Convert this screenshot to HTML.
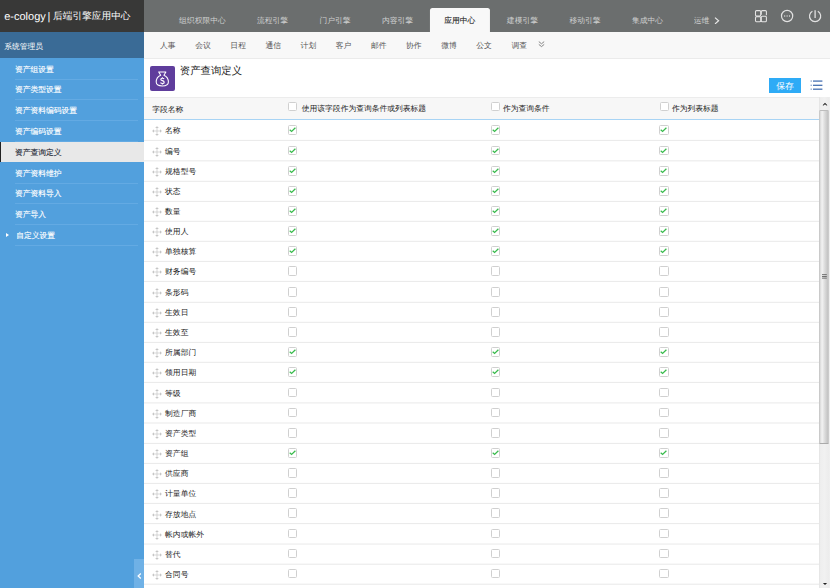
<!DOCTYPE html>
<html><head><meta charset="utf-8">
<style>
*{margin:0;padding:0;box-sizing:border-box}
html,body{width:830px;height:588px;overflow:hidden;background:#fff;font-family:"Liberation Sans",sans-serif;font-size:7.78px;color:#333;text-rendering:geometricPrecision}
#hdr{position:absolute;left:0;top:0;width:144px;height:32px;background:#383837}
#hdr .t{position:absolute;top:0;line-height:35px;color:#fff;white-space:nowrap;font-size:11px}
#hdr .t.cj{font-size:9.7px;line-height:34px}
#top{position:absolute;left:144px;top:0;width:686px;height:32px;background:#6b6e6e}
.tab{position:absolute;top:8.1px;height:23.9px;line-height:26.6px;color:#cfd0d0;font-size:7.78px;transform:translateX(-50%);white-space:nowrap}
.tab.act{background:#f8f8f8;color:#222;-webkit-text-stroke:0.1px #222;width:60.1px;text-align:center;border-radius:2.5px 2.5px 0 0}
#more{position:absolute;left:693.7px;top:8px;height:24px;line-height:26.2px;color:#cfd0d0;font-size:7.78px;white-space:nowrap;width:17.6px;overflow:hidden}
#sbhead{position:absolute;left:0;top:32px;width:144px;height:26.4px;background:#3a6b96}
#sbhead span{position:absolute;left:4.2px;top:0;line-height:30.4px;color:#fff;white-space:nowrap}
#sb{position:absolute;left:0;top:58.4px;width:144px;height:530px;background:#52a0dd}
.si{position:absolute;left:0;width:144px;height:20.8px;color:#fff}
.si span{position:absolute;top:0;line-height:21.9px;white-space:nowrap;-webkit-text-stroke:0.12px currentColor}
.si::after{content:"";position:absolute;left:15px;width:122.5px;bottom:0;height:0.8px;background:#63aae3}
.si.sel{background:#e8e8e8;color:#1d2633}
.si.sel::before{content:"";position:absolute;left:0;top:0;width:1.3px;height:100%;background:#222}
.si.sel::after{display:none}
.tri{position:absolute;left:5.7px;top:8.1px;width:0;height:0;border-left:3.2px solid #fff;border-top:2.5px solid transparent;border-bottom:2.5px solid transparent}
#collapse{position:absolute;left:134px;top:559px;width:10px;height:29px;background:#6fb1e6}
#nav2{position:absolute;left:144px;top:32px;width:686px;height:27px;background:#f8f8f8;border-bottom:1px solid #ebebeb}
.n2{position:absolute;top:32px;line-height:27.2px;color:#555;white-space:nowrap}
#icon{position:absolute;left:149.8px;top:65.7px;width:25.2px;height:25.3px;background:#5f3d9c;border-radius:2px}
#title{position:absolute;left:179.8px;top:59.5px;line-height:24.6px;font-size:10.4px;color:#222;white-space:nowrap}
#save{position:absolute;left:769.3px;top:78px;width:31.6px;height:14.8px;background:#2eabf6;color:#fff;font-size:8.9px;line-height:17px;text-align:center}
#list{position:absolute;left:810px;top:80px}
#thead{position:absolute;left:144px;top:97px;width:675px;height:23px;background:#f7f7f7;border-top:1px solid #ececec;border-bottom:1px solid #a8d4f5}
.th{position:absolute;top:0;line-height:24.6px;white-space:nowrap;color:#222;}
.th.s{line-height:22.4px}
.row{position:absolute;left:144px;width:675px;height:20.2px}
.mv{position:absolute;left:8.1px;top:6px}
.nm{position:absolute;left:21.1px;top:0;line-height:21.6px;white-space:nowrap;color:#222;}
.cb{position:absolute;width:9.3px;height:9.4px;border:1px solid #d0d0d0;border-radius:1.5px;background:#fff}
.cb svg{position:absolute;left:-1px;top:-1px}
#scroll{position:absolute;left:819px;top:97.4px;width:11px;height:491px;background:linear-gradient(to right,#e2e2e2 0,#eeeeee 14%,#f1f1f1 50%,#ececec 90%,#f0f0f0 100%)}
#thumb{position:absolute;left:819.2px;top:110.3px;width:9.9px;height:334px;border-radius:1.5px;background:linear-gradient(to right,#bfbfbf 0%,#e9e9e9 20%,#efefef 35%,#d9d9d9 60%,#c6c6c6 85%,#cdcdcd 100%);border-top:1px solid #bdbdbd;border-bottom:1px solid #aaa}
.sarr{position:absolute;width:0;height:0;border-left:3px solid transparent;border-right:3px solid transparent}
#up{left:822.6px;top:103px;border-left-width:2.2px;border-right-width:2.2px;border-bottom:2.2px solid #333}
#down{left:822.8px;top:582.6px;border-left-width:2.2px;border-right-width:2.2px;border-top:2.2px solid #333}
#grip{position:absolute;left:821.6px;top:273.5px}

</style></head><body>
<div id="hdr"><span class="t" style="left:4.2px">e-cology</span><span class="t" style="left:47.4px">|</span><span class="t cj" style="left:53px">后端引擎应用中心</span></div>
<div id="top"></div>
<div class="tab" style="left:202.4px">组织权限中心</div>
<div class="tab" style="left:272.6px">流程引擎</div>
<div class="tab" style="left:335px">门户引擎</div>
<div class="tab" style="left:397.5px">内容引擎</div>
<div class="tab act" style="left:459.8px">应用中心</div>
<div class="tab" style="left:522.4px">建模引擎</div>
<div class="tab" style="left:585px">移动引擎</div>
<div class="tab" style="left:647.5px">集成中心</div>
<div id="more">运维</div>
<svg style="position:absolute;left:713.5px;top:16.5px" width="6" height="7.5" viewBox="0 0 6 7.5"><path d="M1 0.6L4.6 3.75L1 6.9" stroke="#e8e8e8" stroke-width="1.2" fill="none"/></svg>
<svg style="position:absolute;left:754px;top:9px" width="14" height="14" viewBox="0 0 14 14"><g fill="none" stroke="#e4e4e4" stroke-width="1.05"><rect x="1.5" y="1.6" width="5.2" height="5.5" rx="1"/><path d="M7.3 5.8V2.6A1 1 0 0 1 8.3 1.6H11.4A1 1 0 0 1 12.4 2.6V6.2"/><rect x="1.5" y="7.7" width="5.2" height="5" rx="1"/><rect x="7.3" y="7.3" width="5.1" height="5.4" rx="1"/></g></svg>
<svg style="position:absolute;left:780px;top:9.3px" width="14" height="14" viewBox="0 0 14 14"><circle cx="7.1" cy="7" r="5.6" fill="none" stroke="#e2e2e2" stroke-width="1.2"/><g fill="#e2e2e2"><circle cx="4.7" cy="7" r="0.65"/><circle cx="7.1" cy="7" r="0.65"/><circle cx="9.5" cy="7" r="0.65"/></g></svg>
<svg style="position:absolute;left:808px;top:9.3px" width="14" height="14" viewBox="0 0 14 14"><path d="M4.4 2.2A5.6 5.6 0 1 0 9.8 2.2" fill="none" stroke="#e2e2e2" stroke-width="1.2"/><path d="M7.1 1.3V8.9" stroke="#e2e2e2" stroke-width="1.3"/></svg>
<div id="sbhead"><span>系统管理员</span></div>
<div id="sb"></div>
<div class="si" style="top:58.50px"><span style="left:15px">资产组设置</span></div>
<div class="si" style="top:79.30px"><span style="left:15px">资产类型设置</span></div>
<div class="si" style="top:100.10px"><span style="left:15px">资产资料编码设置</span></div>
<div class="si" style="top:120.90px"><span style="left:15px">资产编码设置</span></div>
<div class="si sel" style="top:141.70px"><span style="left:15px">资产查询定义</span></div>
<div class="si" style="top:162.50px"><span style="left:15px">资产资料维护</span></div>
<div class="si" style="top:183.30px"><span style="left:15px">资产资料导入</span></div>
<div class="si" style="top:204.10px"><span style="left:15px">资产导入</span></div>
<div class="si" style="top:224.90px"><i class="tri"></i><span style="left:16.3px">自定义设置</span></div>
<div id="collapse"><svg style="position:absolute;left:2.5px;top:13.8px" width="5" height="6" viewBox="0 0 5 6"><path d="M3.8 0.6L1.2 3L3.8 5.4" stroke="#fff" stroke-width="1.3" fill="none"/></svg></div>
<div id="nav2"></div>
<span class="n2" style="left:160.10px">人事</span>
<span class="n2" style="left:195.23px">会议</span>
<span class="n2" style="left:230.36px">日程</span>
<span class="n2" style="left:265.49px">通信</span>
<span class="n2" style="left:300.62px">计划</span>
<span class="n2" style="left:335.75px">客户</span>
<span class="n2" style="left:370.88px">邮件</span>
<span class="n2" style="left:406.01px">协作</span>
<span class="n2" style="left:441.14px">微博</span>
<span class="n2" style="left:476.27px">公文</span>
<span class="n2" style="left:511.40px">调查</span>
<svg style="position:absolute;left:537.5px;top:41.2px" width="7" height="6.5" viewBox="0 0 7 6.5"><path d="M0.8 0.6L3.5 2.8L6.2 0.6M0.8 3.4L3.5 5.6L6.2 3.4" stroke="#777" stroke-width="0.9" fill="none"/></svg>
<div id="icon"><svg style="position:absolute;left:0;top:0" width="25" height="25" viewBox="0 0 25 25"><path d="M8.7 5.9H15.9L13.9 9.2C16.9 10.5 18.4 13.5 18.4 16C18.4 18.8 16 19.9 12.3 19.9C8.6 19.9 6.2 18.8 6.2 16C6.2 13.5 7.7 10.5 10.7 9.2Z" fill="none" stroke="#fff" stroke-width="1.05" stroke-linejoin="round"/><path d="M14.1 12.9C13.7 12.4 13.1 12.2 12.4 12.2C11.4 12.2 10.8 12.7 10.8 13.4C10.8 15 14.2 14.3 14.2 16.2C14.2 17 13.5 17.5 12.4 17.5C11.6 17.5 10.9 17.2 10.5 16.7M12.4 11.2V12.2M12.4 17.5V18.5" fill="none" stroke="#fff" stroke-width="1.15"/></svg></div>
<div id="title">资产查询定义</div>
<div id="save">保存</div>
<svg id="list" width="13" height="11" viewBox="0 0 13 11"><g fill="#2f5fa8"><rect x="0.7" y="0.5" width="0.9" height="1.1"/><rect x="3" y="0.5" width="9.4" height="1.15"/><rect x="0.7" y="4.7" width="0.9" height="1.1"/><rect x="3" y="4.7" width="9.4" height="1.15"/><rect x="0.7" y="8.6" width="0.9" height="1.1"/><rect x="3" y="8.6" width="9.4" height="1.15"/></g></svg>
<div id="thead">
<span class="th" style="left:8.2px">字段名称</span>
<span class="cb" style="left:144.2px;top:4.1px"></span><span class="th s" style="left:157.8px">使用该字段作为查询条件或列表标题</span>
<span class="cb" style="left:347.2px;top:4.1px"></span><span class="th s" style="left:359px">作为查询条件</span>
<span class="cb" style="left:515.5px;top:4.1px"></span><span class="th s" style="left:528px">作为列表标题</span>
</div>
<div class="row" style="top:120.40px"><svg class="mv" width="10" height="10" viewBox="0 0 10 10"><path d="M0.8 5H9.2M5 0.8V9.2" stroke="#c6c6c6" stroke-width="0.7" fill="none"/><path d="M5 0.2L6.9 2H3.1ZM5 9.8L6.9 8H3.1ZM0.2 5L2 3.3V6.7ZM9.8 5L8 3.3V6.7Z" fill="#c6c6c6"/></svg><span class="nm">名称</span><span class="cb" style="left:144.0px;top:4.9px"><svg width="9" height="9" viewBox="0 0 9 9"><path d="M1.7 4.7L3.6 6.5L7.4 2.8" stroke="#38bb4c" stroke-width="1.25" fill="none"/></svg></span><span class="cb" style="left:346.9px;top:4.9px"><svg width="9" height="9" viewBox="0 0 9 9"><path d="M1.7 4.7L3.6 6.5L7.4 2.8" stroke="#38bb4c" stroke-width="1.25" fill="none"/></svg></span><span class="cb" style="left:515.3px;top:4.9px"><svg width="9" height="9" viewBox="0 0 9 9"><path d="M1.7 4.7L3.6 6.5L7.4 2.8" stroke="#38bb4c" stroke-width="1.25" fill="none"/></svg></span></div>
<div class="row" style="top:140.85px"><svg class="mv" width="10" height="10" viewBox="0 0 10 10"><path d="M0.8 5H9.2M5 0.8V9.2" stroke="#c6c6c6" stroke-width="0.7" fill="none"/><path d="M5 0.2L6.9 2H3.1ZM5 9.8L6.9 8H3.1ZM0.2 5L2 3.3V6.7ZM9.8 5L8 3.3V6.7Z" fill="#c6c6c6"/></svg><span class="nm">编号</span><span class="cb" style="left:144.0px;top:4.9px"><svg width="9" height="9" viewBox="0 0 9 9"><path d="M1.7 4.7L3.6 6.5L7.4 2.8" stroke="#38bb4c" stroke-width="1.25" fill="none"/></svg></span><span class="cb" style="left:346.9px;top:4.9px"><svg width="9" height="9" viewBox="0 0 9 9"><path d="M1.7 4.7L3.6 6.5L7.4 2.8" stroke="#38bb4c" stroke-width="1.25" fill="none"/></svg></span><span class="cb" style="left:515.3px;top:4.9px"><svg width="9" height="9" viewBox="0 0 9 9"><path d="M1.7 4.7L3.6 6.5L7.4 2.8" stroke="#38bb4c" stroke-width="1.25" fill="none"/></svg></span></div>
<div class="row" style="top:161.30px"><svg class="mv" width="10" height="10" viewBox="0 0 10 10"><path d="M0.8 5H9.2M5 0.8V9.2" stroke="#c6c6c6" stroke-width="0.7" fill="none"/><path d="M5 0.2L6.9 2H3.1ZM5 9.8L6.9 8H3.1ZM0.2 5L2 3.3V6.7ZM9.8 5L8 3.3V6.7Z" fill="#c6c6c6"/></svg><span class="nm">规格型号</span><span class="cb" style="left:144.0px;top:4.9px"><svg width="9" height="9" viewBox="0 0 9 9"><path d="M1.7 4.7L3.6 6.5L7.4 2.8" stroke="#38bb4c" stroke-width="1.25" fill="none"/></svg></span><span class="cb" style="left:346.9px;top:4.9px"><svg width="9" height="9" viewBox="0 0 9 9"><path d="M1.7 4.7L3.6 6.5L7.4 2.8" stroke="#38bb4c" stroke-width="1.25" fill="none"/></svg></span><span class="cb" style="left:515.3px;top:4.9px"><svg width="9" height="9" viewBox="0 0 9 9"><path d="M1.7 4.7L3.6 6.5L7.4 2.8" stroke="#38bb4c" stroke-width="1.25" fill="none"/></svg></span></div>
<div class="row" style="top:181.40px"><svg class="mv" width="10" height="10" viewBox="0 0 10 10"><path d="M0.8 5H9.2M5 0.8V9.2" stroke="#c6c6c6" stroke-width="0.7" fill="none"/><path d="M5 0.2L6.9 2H3.1ZM5 9.8L6.9 8H3.1ZM0.2 5L2 3.3V6.7ZM9.8 5L8 3.3V6.7Z" fill="#c6c6c6"/></svg><span class="nm">状态</span><span class="cb" style="left:144.0px;top:4.9px"><svg width="9" height="9" viewBox="0 0 9 9"><path d="M1.7 4.7L3.6 6.5L7.4 2.8" stroke="#38bb4c" stroke-width="1.25" fill="none"/></svg></span><span class="cb" style="left:346.9px;top:4.9px"><svg width="9" height="9" viewBox="0 0 9 9"><path d="M1.7 4.7L3.6 6.5L7.4 2.8" stroke="#38bb4c" stroke-width="1.25" fill="none"/></svg></span><span class="cb" style="left:515.3px;top:4.9px"><svg width="9" height="9" viewBox="0 0 9 9"><path d="M1.7 4.7L3.6 6.5L7.4 2.8" stroke="#38bb4c" stroke-width="1.25" fill="none"/></svg></span></div>
<div class="row" style="top:201.30px"><svg class="mv" width="10" height="10" viewBox="0 0 10 10"><path d="M0.8 5H9.2M5 0.8V9.2" stroke="#c6c6c6" stroke-width="0.7" fill="none"/><path d="M5 0.2L6.9 2H3.1ZM5 9.8L6.9 8H3.1ZM0.2 5L2 3.3V6.7ZM9.8 5L8 3.3V6.7Z" fill="#c6c6c6"/></svg><span class="nm">数量</span><span class="cb" style="left:144.0px;top:4.9px"><svg width="9" height="9" viewBox="0 0 9 9"><path d="M1.7 4.7L3.6 6.5L7.4 2.8" stroke="#38bb4c" stroke-width="1.25" fill="none"/></svg></span><span class="cb" style="left:346.9px;top:4.9px"><svg width="9" height="9" viewBox="0 0 9 9"><path d="M1.7 4.7L3.6 6.5L7.4 2.8" stroke="#38bb4c" stroke-width="1.25" fill="none"/></svg></span><span class="cb" style="left:515.3px;top:4.9px"><svg width="9" height="9" viewBox="0 0 9 9"><path d="M1.7 4.7L3.6 6.5L7.4 2.8" stroke="#38bb4c" stroke-width="1.25" fill="none"/></svg></span></div>
<div class="row" style="top:221.30px"><svg class="mv" width="10" height="10" viewBox="0 0 10 10"><path d="M0.8 5H9.2M5 0.8V9.2" stroke="#c6c6c6" stroke-width="0.7" fill="none"/><path d="M5 0.2L6.9 2H3.1ZM5 9.8L6.9 8H3.1ZM0.2 5L2 3.3V6.7ZM9.8 5L8 3.3V6.7Z" fill="#c6c6c6"/></svg><span class="nm">使用人</span><span class="cb" style="left:144.0px;top:4.9px"><svg width="9" height="9" viewBox="0 0 9 9"><path d="M1.7 4.7L3.6 6.5L7.4 2.8" stroke="#38bb4c" stroke-width="1.25" fill="none"/></svg></span><span class="cb" style="left:346.9px;top:4.9px"><svg width="9" height="9" viewBox="0 0 9 9"><path d="M1.7 4.7L3.6 6.5L7.4 2.8" stroke="#38bb4c" stroke-width="1.25" fill="none"/></svg></span><span class="cb" style="left:515.3px;top:4.9px"><svg width="9" height="9" viewBox="0 0 9 9"><path d="M1.7 4.7L3.6 6.5L7.4 2.8" stroke="#38bb4c" stroke-width="1.25" fill="none"/></svg></span></div>
<div class="row" style="top:241.40px"><svg class="mv" width="10" height="10" viewBox="0 0 10 10"><path d="M0.8 5H9.2M5 0.8V9.2" stroke="#c6c6c6" stroke-width="0.7" fill="none"/><path d="M5 0.2L6.9 2H3.1ZM5 9.8L6.9 8H3.1ZM0.2 5L2 3.3V6.7ZM9.8 5L8 3.3V6.7Z" fill="#c6c6c6"/></svg><span class="nm">单独核算</span><span class="cb" style="left:144.0px;top:4.9px"><svg width="9" height="9" viewBox="0 0 9 9"><path d="M1.7 4.7L3.6 6.5L7.4 2.8" stroke="#38bb4c" stroke-width="1.25" fill="none"/></svg></span><span class="cb" style="left:346.9px;top:4.9px"><svg width="9" height="9" viewBox="0 0 9 9"><path d="M1.7 4.7L3.6 6.5L7.4 2.8" stroke="#38bb4c" stroke-width="1.25" fill="none"/></svg></span><span class="cb" style="left:515.3px;top:4.9px"><svg width="9" height="9" viewBox="0 0 9 9"><path d="M1.7 4.7L3.6 6.5L7.4 2.8" stroke="#38bb4c" stroke-width="1.25" fill="none"/></svg></span></div>
<div class="row" style="top:261.40px"><svg class="mv" width="10" height="10" viewBox="0 0 10 10"><path d="M0.8 5H9.2M5 0.8V9.2" stroke="#c6c6c6" stroke-width="0.7" fill="none"/><path d="M5 0.2L6.9 2H3.1ZM5 9.8L6.9 8H3.1ZM0.2 5L2 3.3V6.7ZM9.8 5L8 3.3V6.7Z" fill="#c6c6c6"/></svg><span class="nm">财务编号</span><span class="cb" style="left:144.0px;top:4.9px"></span><span class="cb" style="left:346.9px;top:4.9px"></span><span class="cb" style="left:515.3px;top:4.9px"></span></div>
<div class="row" style="top:282.30px"><svg class="mv" width="10" height="10" viewBox="0 0 10 10"><path d="M0.8 5H9.2M5 0.8V9.2" stroke="#c6c6c6" stroke-width="0.7" fill="none"/><path d="M5 0.2L6.9 2H3.1ZM5 9.8L6.9 8H3.1ZM0.2 5L2 3.3V6.7ZM9.8 5L8 3.3V6.7Z" fill="#c6c6c6"/></svg><span class="nm">条形码</span><span class="cb" style="left:144.0px;top:4.9px"></span><span class="cb" style="left:346.9px;top:4.9px"></span><span class="cb" style="left:515.3px;top:4.9px"></span></div>
<div class="row" style="top:302.30px"><svg class="mv" width="10" height="10" viewBox="0 0 10 10"><path d="M0.8 5H9.2M5 0.8V9.2" stroke="#c6c6c6" stroke-width="0.7" fill="none"/><path d="M5 0.2L6.9 2H3.1ZM5 9.8L6.9 8H3.1ZM0.2 5L2 3.3V6.7ZM9.8 5L8 3.3V6.7Z" fill="#c6c6c6"/></svg><span class="nm">生效日</span><span class="cb" style="left:144.0px;top:4.9px"></span><span class="cb" style="left:346.9px;top:4.9px"></span><span class="cb" style="left:515.3px;top:4.9px"></span></div>
<div class="row" style="top:322.40px"><svg class="mv" width="10" height="10" viewBox="0 0 10 10"><path d="M0.8 5H9.2M5 0.8V9.2" stroke="#c6c6c6" stroke-width="0.7" fill="none"/><path d="M5 0.2L6.9 2H3.1ZM5 9.8L6.9 8H3.1ZM0.2 5L2 3.3V6.7ZM9.8 5L8 3.3V6.7Z" fill="#c6c6c6"/></svg><span class="nm">生效至</span><span class="cb" style="left:144.0px;top:4.9px"></span><span class="cb" style="left:346.9px;top:4.9px"></span><span class="cb" style="left:515.3px;top:4.9px"></span></div>
<div class="row" style="top:342.30px"><svg class="mv" width="10" height="10" viewBox="0 0 10 10"><path d="M0.8 5H9.2M5 0.8V9.2" stroke="#c6c6c6" stroke-width="0.7" fill="none"/><path d="M5 0.2L6.9 2H3.1ZM5 9.8L6.9 8H3.1ZM0.2 5L2 3.3V6.7ZM9.8 5L8 3.3V6.7Z" fill="#c6c6c6"/></svg><span class="nm">所属部门</span><span class="cb" style="left:144.0px;top:4.9px"><svg width="9" height="9" viewBox="0 0 9 9"><path d="M1.7 4.7L3.6 6.5L7.4 2.8" stroke="#38bb4c" stroke-width="1.25" fill="none"/></svg></span><span class="cb" style="left:346.9px;top:4.9px"><svg width="9" height="9" viewBox="0 0 9 9"><path d="M1.7 4.7L3.6 6.5L7.4 2.8" stroke="#38bb4c" stroke-width="1.25" fill="none"/></svg></span><span class="cb" style="left:515.3px;top:4.9px"><svg width="9" height="9" viewBox="0 0 9 9"><path d="M1.7 4.7L3.6 6.5L7.4 2.8" stroke="#38bb4c" stroke-width="1.25" fill="none"/></svg></span></div>
<div class="row" style="top:362.40px"><svg class="mv" width="10" height="10" viewBox="0 0 10 10"><path d="M0.8 5H9.2M5 0.8V9.2" stroke="#c6c6c6" stroke-width="0.7" fill="none"/><path d="M5 0.2L6.9 2H3.1ZM5 9.8L6.9 8H3.1ZM0.2 5L2 3.3V6.7ZM9.8 5L8 3.3V6.7Z" fill="#c6c6c6"/></svg><span class="nm">领用日期</span><span class="cb" style="left:144.0px;top:4.9px"><svg width="9" height="9" viewBox="0 0 9 9"><path d="M1.7 4.7L3.6 6.5L7.4 2.8" stroke="#38bb4c" stroke-width="1.25" fill="none"/></svg></span><span class="cb" style="left:346.9px;top:4.9px"><svg width="9" height="9" viewBox="0 0 9 9"><path d="M1.7 4.7L3.6 6.5L7.4 2.8" stroke="#38bb4c" stroke-width="1.25" fill="none"/></svg></span><span class="cb" style="left:515.3px;top:4.9px"><svg width="9" height="9" viewBox="0 0 9 9"><path d="M1.7 4.7L3.6 6.5L7.4 2.8" stroke="#38bb4c" stroke-width="1.25" fill="none"/></svg></span></div>
<div class="row" style="top:382.90px"><svg class="mv" width="10" height="10" viewBox="0 0 10 10"><path d="M0.8 5H9.2M5 0.8V9.2" stroke="#c6c6c6" stroke-width="0.7" fill="none"/><path d="M5 0.2L6.9 2H3.1ZM5 9.8L6.9 8H3.1ZM0.2 5L2 3.3V6.7ZM9.8 5L8 3.3V6.7Z" fill="#c6c6c6"/></svg><span class="nm">等级</span><span class="cb" style="left:144.0px;top:4.9px"></span><span class="cb" style="left:346.9px;top:4.9px"></span><span class="cb" style="left:515.3px;top:4.9px"></span></div>
<div class="row" style="top:403.00px"><svg class="mv" width="10" height="10" viewBox="0 0 10 10"><path d="M0.8 5H9.2M5 0.8V9.2" stroke="#c6c6c6" stroke-width="0.7" fill="none"/><path d="M5 0.2L6.9 2H3.1ZM5 9.8L6.9 8H3.1ZM0.2 5L2 3.3V6.7ZM9.8 5L8 3.3V6.7Z" fill="#c6c6c6"/></svg><span class="nm">制造厂商</span><span class="cb" style="left:144.0px;top:4.9px"></span><span class="cb" style="left:346.9px;top:4.9px"></span><span class="cb" style="left:515.3px;top:4.9px"></span></div>
<div class="row" style="top:423.40px"><svg class="mv" width="10" height="10" viewBox="0 0 10 10"><path d="M0.8 5H9.2M5 0.8V9.2" stroke="#c6c6c6" stroke-width="0.7" fill="none"/><path d="M5 0.2L6.9 2H3.1ZM5 9.8L6.9 8H3.1ZM0.2 5L2 3.3V6.7ZM9.8 5L8 3.3V6.7Z" fill="#c6c6c6"/></svg><span class="nm">资产类型</span><span class="cb" style="left:144.0px;top:4.9px"></span><span class="cb" style="left:346.9px;top:4.9px"></span><span class="cb" style="left:515.3px;top:4.9px"></span></div>
<div class="row" style="top:443.40px"><svg class="mv" width="10" height="10" viewBox="0 0 10 10"><path d="M0.8 5H9.2M5 0.8V9.2" stroke="#c6c6c6" stroke-width="0.7" fill="none"/><path d="M5 0.2L6.9 2H3.1ZM5 9.8L6.9 8H3.1ZM0.2 5L2 3.3V6.7ZM9.8 5L8 3.3V6.7Z" fill="#c6c6c6"/></svg><span class="nm">资产组</span><span class="cb" style="left:144.0px;top:4.9px"><svg width="9" height="9" viewBox="0 0 9 9"><path d="M1.7 4.7L3.6 6.5L7.4 2.8" stroke="#38bb4c" stroke-width="1.25" fill="none"/></svg></span><span class="cb" style="left:346.9px;top:4.9px"><svg width="9" height="9" viewBox="0 0 9 9"><path d="M1.7 4.7L3.6 6.5L7.4 2.8" stroke="#38bb4c" stroke-width="1.25" fill="none"/></svg></span><span class="cb" style="left:515.3px;top:4.9px"><svg width="9" height="9" viewBox="0 0 9 9"><path d="M1.7 4.7L3.6 6.5L7.4 2.8" stroke="#38bb4c" stroke-width="1.25" fill="none"/></svg></span></div>
<div class="row" style="top:463.40px"><svg class="mv" width="10" height="10" viewBox="0 0 10 10"><path d="M0.8 5H9.2M5 0.8V9.2" stroke="#c6c6c6" stroke-width="0.7" fill="none"/><path d="M5 0.2L6.9 2H3.1ZM5 9.8L6.9 8H3.1ZM0.2 5L2 3.3V6.7ZM9.8 5L8 3.3V6.7Z" fill="#c6c6c6"/></svg><span class="nm">供应商</span><span class="cb" style="left:144.0px;top:4.9px"></span><span class="cb" style="left:346.9px;top:4.9px"></span><span class="cb" style="left:515.3px;top:4.9px"></span></div>
<div class="row" style="top:483.40px"><svg class="mv" width="10" height="10" viewBox="0 0 10 10"><path d="M0.8 5H9.2M5 0.8V9.2" stroke="#c6c6c6" stroke-width="0.7" fill="none"/><path d="M5 0.2L6.9 2H3.1ZM5 9.8L6.9 8H3.1ZM0.2 5L2 3.3V6.7ZM9.8 5L8 3.3V6.7Z" fill="#c6c6c6"/></svg><span class="nm">计量单位</span><span class="cb" style="left:144.0px;top:4.9px"></span><span class="cb" style="left:346.9px;top:4.9px"></span><span class="cb" style="left:515.3px;top:4.9px"></span></div>
<div class="row" style="top:503.60px"><svg class="mv" width="10" height="10" viewBox="0 0 10 10"><path d="M0.8 5H9.2M5 0.8V9.2" stroke="#c6c6c6" stroke-width="0.7" fill="none"/><path d="M5 0.2L6.9 2H3.1ZM5 9.8L6.9 8H3.1ZM0.2 5L2 3.3V6.7ZM9.8 5L8 3.3V6.7Z" fill="#c6c6c6"/></svg><span class="nm">存放地点</span><span class="cb" style="left:144.0px;top:4.9px"></span><span class="cb" style="left:346.9px;top:4.9px"></span><span class="cb" style="left:515.3px;top:4.9px"></span></div>
<div class="row" style="top:524.05px"><svg class="mv" width="10" height="10" viewBox="0 0 10 10"><path d="M0.8 5H9.2M5 0.8V9.2" stroke="#c6c6c6" stroke-width="0.7" fill="none"/><path d="M5 0.2L6.9 2H3.1ZM5 9.8L6.9 8H3.1ZM0.2 5L2 3.3V6.7ZM9.8 5L8 3.3V6.7Z" fill="#c6c6c6"/></svg><span class="nm">帐内或帐外</span><span class="cb" style="left:144.0px;top:4.9px"></span><span class="cb" style="left:346.9px;top:4.9px"></span><span class="cb" style="left:515.3px;top:4.9px"></span></div>
<div class="row" style="top:544.20px"><svg class="mv" width="10" height="10" viewBox="0 0 10 10"><path d="M0.8 5H9.2M5 0.8V9.2" stroke="#c6c6c6" stroke-width="0.7" fill="none"/><path d="M5 0.2L6.9 2H3.1ZM5 9.8L6.9 8H3.1ZM0.2 5L2 3.3V6.7ZM9.8 5L8 3.3V6.7Z" fill="#c6c6c6"/></svg><span class="nm">替代</span><span class="cb" style="left:144.0px;top:4.9px"></span><span class="cb" style="left:346.9px;top:4.9px"></span><span class="cb" style="left:515.3px;top:4.9px"></span></div>
<div class="row" style="top:564.20px"><svg class="mv" width="10" height="10" viewBox="0 0 10 10"><path d="M0.8 5H9.2M5 0.8V9.2" stroke="#c6c6c6" stroke-width="0.7" fill="none"/><path d="M5 0.2L6.9 2H3.1ZM5 9.8L6.9 8H3.1ZM0.2 5L2 3.3V6.7ZM9.8 5L8 3.3V6.7Z" fill="#c6c6c6"/></svg><span class="nm">合同号</span><span class="cb" style="left:144.0px;top:4.9px"></span><span class="cb" style="left:346.9px;top:4.9px"></span><span class="cb" style="left:515.3px;top:4.9px"></span></div>
<svg style="position:absolute;left:144px;top:97px" width="675" height="491" viewBox="0 0 675 491"><g fill="#e9e9e9"><rect x="0" y="42.90" width="675" height="1"/><rect x="0" y="63.35" width="675" height="1"/><rect x="0" y="83.80" width="675" height="1"/><rect x="0" y="103.90" width="675" height="1"/><rect x="0" y="123.80" width="675" height="1"/><rect x="0" y="143.80" width="675" height="1"/><rect x="0" y="163.90" width="675" height="1"/><rect x="0" y="183.90" width="675" height="1"/><rect x="0" y="204.80" width="675" height="1"/><rect x="0" y="224.80" width="675" height="1"/><rect x="0" y="244.90" width="675" height="1"/><rect x="0" y="264.80" width="675" height="1"/><rect x="0" y="284.90" width="675" height="1"/><rect x="0" y="305.40" width="675" height="1"/><rect x="0" y="325.50" width="675" height="1"/><rect x="0" y="345.90" width="675" height="1"/><rect x="0" y="365.90" width="675" height="1"/><rect x="0" y="385.90" width="675" height="1"/><rect x="0" y="405.90" width="675" height="1"/><rect x="0" y="426.10" width="675" height="1"/><rect x="0" y="446.55" width="675" height="1"/><rect x="0" y="466.70" width="675" height="1"/><rect x="0" y="486.70" width="675" height="1"/></g></svg>
<div id="scroll"></div>
<div id="thumb"></div>
<svg style="position:absolute;left:822.3px;top:102px" width="6" height="4" viewBox="0 0 6 4"><path d="M0.6 3.2L3 0.8L5.4 3.2L4.4 3.4L3 2.2L1.6 3.4Z" fill="#222"/></svg>
<svg style="position:absolute;left:822.3px;top:582px" width="6" height="4" viewBox="0 0 6 4"><path d="M0.9 0.9H5.1L3 3.1Z" fill="#222"/></svg>
<svg id="grip" width="5" height="5" viewBox="0 0 5 5"><g fill="#555"><rect x="0" y="0.3" width="4.8" height="0.8"/><rect x="0" y="2" width="4.8" height="0.8"/><rect x="0" y="3.7" width="4.8" height="0.8"/></g></svg>

</body></html>
